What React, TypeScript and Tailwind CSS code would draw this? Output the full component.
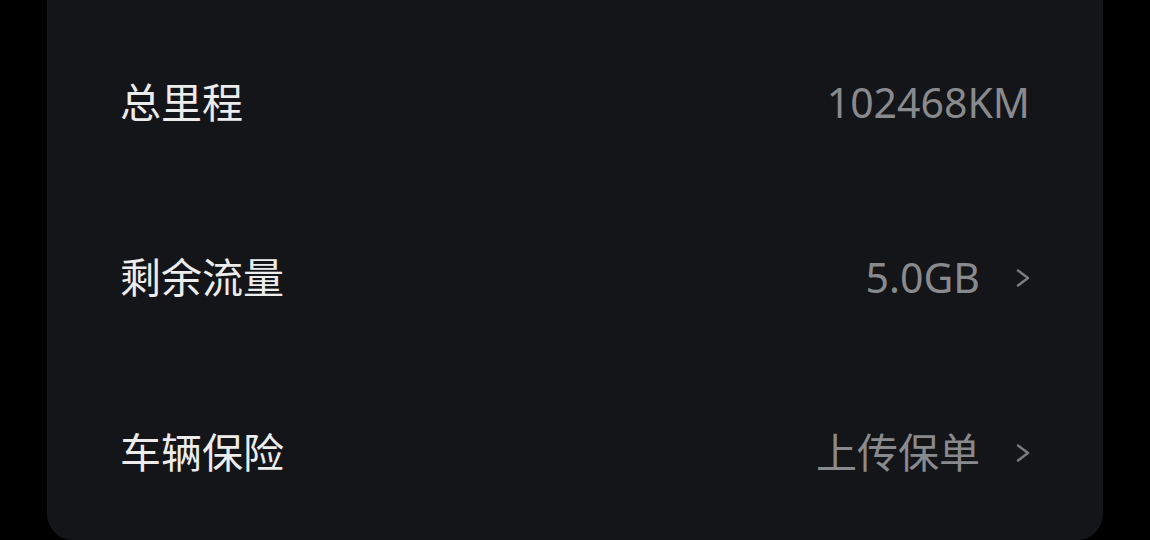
import React from "react";

const rows = [
  { label: "总里程", value: "102468KM", arrow: false },
  { label: "剩余流量", value: "5.0GB", arrow: true },
  { label: "车辆保险", value: "上传保单", arrow: true },
];

const Chevron = () => (
  <svg width="14" height="18" viewBox="0 0 14 18" fill="none" className="ml-[36px]">
    <path d="M2 1.5 L12 9 L2 16.5" stroke="#7b7c7f" strokeWidth="2.4" strokeLinecap="round" strokeLinejoin="round" />
  </svg>
);

const App = () => {
  return (
    <div className="w-[1150px] h-[540px] bg-black overflow-hidden">
      <div
        className="mx-[47px] h-[540px] bg-[#141519] rounded-b-[26px] pt-[15px] px-[73px]"
        style={{ fontFamily: '"Noto Sans", "Noto Sans CJK SC", sans-serif' }}
      >
        {rows.map((r) => (
          <div key={r.label} className="h-[175px] flex items-center justify-between">
            <p className="text-[41px] text-[#ececed] font-normal">{r.label}</p>
            <div className="flex items-center">
              <span className="text-[41px] text-[#898a8d]">{r.value}</span>
              {r.arrow && <Chevron />}
            </div>
          </div>
        ))}
      </div>
    </div>
  );
};

export default App;
